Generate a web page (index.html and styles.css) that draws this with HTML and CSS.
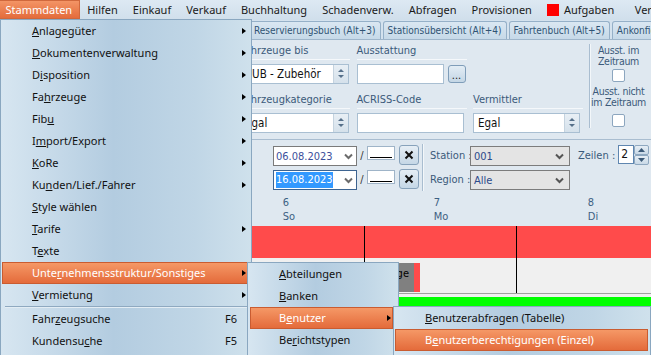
FILE: index.html
```html
<!DOCTYPE html>
<html lang="de">
<head>
    <meta charset="UTF-8" />
    <title>Stammdaten</title>
    <link rel="stylesheet" href="styles.css">
</head>
<body>
    <div class="menubar">
        <span class="mb-item open">Stammdaten</span>
        <span class="mb-item">Hilfen</span>
        <span class="mb-item">Einkauf</span>
        <span class="mb-item">Verkauf</span>
        <span class="mb-item">Buchhaltung</span>
        <span class="mb-item">Schadenverw.</span>
        <span class="mb-item">Abfragen</span>
        <span class="mb-item">Provisionen</span>
        <span class="mb-item tasks"><i class="task-flag"></i>Aufgaben</span>
        <span class="mb-item">Vermietung</span>
    </div>

    <div class="tabs">
        <div class="tab">Reservierungsbuch (Alt+3)</div>
        <div class="tab">Stationsübersicht (Alt+4)</div>
        <div class="tab">Fahrtenbuch (Alt+5)</div>
        <div class="tab">Ankonfigurationen (Alt+6)</div>
    </div>

    <!-- Filter oben -->
    <div class="filter-panel">
        <div class="filter-grid">
            <div class="cap">Fahrzeuge bis</div>
            <div class="cap">Ausstattung</div>
            <div></div>
            <div class="combo wide"><span>ZUB - Zubehör</span><i class="spin"></i></div>
            <div class="with-btn"><div class="edit short"></div><span class="dots">...</span></div>
            <div></div>
            <div class="cap">Fahrzeugkategorie</div>
            <div class="cap">ACRISS-Code</div>
            <div class="cap">Vermittler</div>
            <div class="combo wide"><span>Egal</span><i class="spin"></i></div>
            <div class="edit"></div>
            <div class="combo"><span>Egal</span><i class="spin"></i></div>
        </div>
        <div class="vsep"></div>
        <div class="ausst">
            <span class="ausst-txt">Ausst. im<br>Zeitraum</span>
            <i class="check"></i>
            <span class="ausst-txt second">Ausst. nicht<br>im Zeitraum</span>
            <i class="check last"></i>
        </div>
    </div>

    <!-- Zeitraum / Station -->
    <div class="date-panel">
        <div class="date-rows">
            <div class="date-row">
                <div class="date"><span>06.08.2023</span><svg width="9" height="7"><path d="M1 1.5l3.5 3.5L8 1.5" stroke="#6b6b6b" stroke-width="2" fill="none"/></svg></div>
                <span class="slash">/</span>
                <div class="time"></div>
                <span class="clear"><svg width="10" height="10"><path d="M1.5 1.5l7 7M8.5 1.5l-7 7" stroke="#111" stroke-width="2"/></svg></span>
            </div>
            <div class="date-row">
                <div class="date focus"><span class="sel">16.08.2023</span><svg width="9" height="7"><path d="M1 1.5l3.5 3.5L8 1.5" stroke="#6b6b6b" stroke-width="2" fill="none"/></svg></div>
                <span class="slash">/</span>
                <div class="time"></div>
                <span class="clear"><svg width="10" height="10"><path d="M1.5 1.5l7 7M8.5 1.5l-7 7" stroke="#111" stroke-width="2"/></svg></span>
            </div>
        </div>
        <div class="vsep tall"></div>
        <div class="station">
            <span class="st-label">Station :</span>
            <div class="select"><span>001</span><svg width="9" height="7"><path d="M1 1.5l3.5 3.5L8 1.5" stroke="#555" stroke-width="2" fill="none"/></svg></div>
            <span class="st-label">Region :</span>
            <div class="select"><span>Alle</span><svg width="9" height="7"><path d="M1 1.5l3.5 3.5L8 1.5" stroke="#555" stroke-width="2" fill="none"/></svg></div>
        </div>
        <div class="zeilen">
            <span class="z-label">Zeilen :</span>
            <div class="num">2</div>
            <div class="updown">
                <span><svg width="7" height="4"><path d="M0 4L3.5 0L7 4z" fill="#3c5a78"/></svg></span>
                <span><svg width="7" height="4"><path d="M0 0L3.5 4L7 0z" fill="#3c5a78"/></svg></span>
            </div>
        </div>
    </div>

    <!-- Belegungsplan -->
    <div class="timeline">
        <div class="tl-head">
            <div></div>
            <div class="day-cap"><span>6<br>So</span></div>
            <div class="day-cap"><span>7<br>Mo</span></div>
            <div class="day-cap"><span>8<br>Di</span></div>
        </div>
        <div class="tl-row red">
            <div></div><div class="day"></div><div class="day"></div><div class="day"></div>
        </div>
        <div class="tl-row grey">
            <div></div><div class="day"></div><div class="day"></div><div class="day"></div>
            <div class="booking" style="left: 320px; width: 100px;">Montage</div>
        </div>
        <div class="tl-row green"></div>
    </div>

    <!-- geöffnetes Menü -->
    <div class="menu menu-main">
        <div class="mi sub"><u>A</u>nlagegüter</div>
        <div class="mi sub"><u>D</u>okumentenverwaltung</div>
        <div class="mi sub">D<u>i</u>sposition</div>
        <div class="mi sub">Fa<u>h</u>rzeuge</div>
        <div class="mi sub">Fib<u>u</u></div>
        <div class="mi sub">I<u>m</u>port/Export</div>
        <div class="mi sub"><u>K</u>oRe</div>
        <div class="mi sub">Ku<u>n</u>den/Lief./Fahrer</div>
        <div class="mi"><u>S</u>tyle wählen</div>
        <div class="mi sub"><u>T</u>arife</div>
        <div class="mi">T<u>e</u>xte</div>
        <div class="mi sub on">Unte<u>r</u>nehmensstruktur/Sonstiges</div>
        <div class="mi sub"><u>V</u>ermietung</div>
        <div class="sep"></div>
        <div class="mi">Fahr<u>z</u>eugsuche<span class="key">F6</span></div>
        <div class="mi">Kundensu<u>c</u>he<span class="key">F5</span></div>
    </div>

    <div class="menu menu-sub1">
        <div class="mi"><u>A</u>bteilungen</div>
        <div class="mi"><u>B</u>anken</div>
        <div class="mi sub on">B<u>e</u>nutzer</div>
        <div class="mi">Be<u>r</u>ichtstypen</div>
        <div class="mi">
            <svg class="mi-icon" width="16" height="16"><rect x="4" y="1" width="8" height="5" fill="#9aa3ab"/><rect x="1" y="5" width="14" height="7" rx="1" fill="#7d868e"/><rect x="4" y="10" width="8" height="5" fill="#e8e8e8" stroke="#8a9198"/></svg>
            <u>D</u>rucker
        </div>
    </div>

    <div class="menu menu-sub2">
        <div class="mi"><u>B</u>enutzerabfragen (Tabelle)</div>
        <div class="mi on">B<u>e</u>nutzerberechtigungen (Einzel)</div>
    </div>
</body>
</html>
```

FILE: styles.css
```css
* {
    box-sizing: border-box;
}

html,
body {
    margin: 0;
    padding: 0;
    overflow: hidden;
}

body {
    position: relative;
    width: 651px;
    height: 355px;
    background: #dfe8f0;
    color: #3b5a7a;
    font: 11px "DejaVu Sans Condensed", "Liberation Sans", sans-serif;
}

/* Menüleiste */
.menubar {
    display: flex;
    height: 20px;
    margin-left: -2px;
    background: linear-gradient(#dde9f3, #d0dfeb);
    color: #1a1a1a;
    font: 11px "Noto Sans", sans-serif;
    white-space: nowrap;
}

.mb-item {
    display: flex;
    align-items: center;
    height: 19px;
    padding: 0 7.5px;
}

.mb-item.open {
    padding: 0 6.5px;
    color: #fff;
    background: linear-gradient(#f39465, #e46c3c);
    border: 1px solid #d0683c;
}

.mb-item.tasks {
    padding-right: 13px;
}

.task-flag {
    width: 12px;
    height: 12px;
    margin-right: 5px;
    background: #f00;
}

/* Reiter */
.tabs {
    display: flex;
    height: 20px;
    padding-left: 249px;
    background: #d4e2ee;
    border-bottom: 1px solid #9fb6cb;
    white-space: nowrap;
    overflow: hidden;
}

.tab {
    flex: none;
    margin: 1px 2px 0 0;
    padding: 0 4px;
    line-height: 18px;
    font-size: 10px;
    color: #2f5373;
    background: linear-gradient(#dae7f2, #c6d9e8);
    border: 1px solid #95b0c8;
    border-bottom: 0;
    border-radius: 3px 3px 0 0;
}

/* Filterbereich */
.filter-panel {
    display: flex;
    height: 100px;
    padding: 2px 0 0 240px;
    border-bottom: 1px solid #a9bdd0;
}

.filter-grid {
    display: grid;
    grid-template-columns: repeat(3, 110px);
    grid-template-rows: 22px 27px 22px 20px;
    column-gap: 6.5px;
    align-items: start;
}

.cap {
    height: 18px;
    line-height: 17px;
    white-space: nowrap;
    border-bottom: 1px solid #f5f8fb;
}

.combo,
.edit {
    height: 20px;
    width: 107px;
    background: #fff;
    border: 1px solid #a9bfd2;
}

.combo {
    display: flex;
    align-items: center;
    justify-content: space-between;
    padding-left: 4px;
    color: #111;
    font-size: 11.5px;
    white-space: nowrap;
}

.combo.wide {
    width: 109px;
}

.spin {
    flex: none;
    width: 15px;
    height: 18px;
    background: linear-gradient(#e8eff5, #d5e1eb);
    border-left: 1px solid #c5d3df;
    position: relative;
}

.spin::before,
.spin::after {
    content: "";
    position: absolute;
    left: 4px;
    border-left: 3px solid transparent;
    border-right: 3px solid transparent;
}

.spin::before {
    top: 4px;
    border-bottom: 3px solid #56708a;
}

.spin::after {
    top: 10px;
    border-top: 3px solid #56708a;
}

.with-btn {
    display: flex;
    gap: 4px;
}

.edit.short {
    width: 87px;
}

.dots {
    width: 18px;
    height: 18px;
    margin-top: 1px;
    text-align: center;
    line-height: 20px;
    color: #222;
    background: linear-gradient(#e3edf5, #c4d6e5);
    border: 1px solid #7f9db9;
    border-radius: 3px;
}

.vsep {
    width: 2px;
    height: 84px;
    margin: 2px 0 0 6px;
    border-left: 1px solid #a9bdd0;
    border-right: 1px solid #f3f7fa;
}

.ausst {
    display: flex;
    flex-direction: column;
    align-items: center;
    width: 55px;
    padding-top: 3px;
}

.ausst-txt {
    text-align: center;
    line-height: 11px;
    font-size: 10.5px;
    letter-spacing: -0.3px;
    white-space: nowrap;
}

.ausst-txt.second {
    margin-top: 4px;
}

.check {
    width: 13px;
    height: 13px;
    margin-top: 2px;
    background: #fff;
    border: 1px solid #8ca6bf;
    border-radius: 2px;
}

.check.last {
    margin-top: 6px;
}

/* Datum, Station */
.date-panel {
    display: flex;
    align-items: flex-start;
    height: 53px;
    padding: 6px 0 0 273px;
}

.date-rows {
    display: flex;
    flex-direction: column;
    gap: 4px;
}

.date-row {
    display: flex;
    align-items: flex-start;
    height: 20px;
}

.date {
    display: flex;
    align-items: center;
    justify-content: space-between;
    width: 84px;
    height: 20px;
    padding: 0 3px 0 2px;
    color: #3c4f9c;
    background: #fff;
    border: 1px solid #7a7a7a;
}

.date.focus {
    border-color: #3d6491;
}

.date .sel {
    color: #fff;
    background: #3399ff;
    line-height: 16px;
}

.slash {
    width: 10px;
    line-height: 20px;
    text-align: center;
    color: #333;
}

.time {
    position: relative;
    width: 28px;
    height: 14px;
    margin-right: 4px;
    background: #fff;
    border: 1px solid #9fb4c8;
}

.time::after {
    content: "";
    position: absolute;
    left: 2px;
    right: 2px;
    bottom: 1px;
    border-bottom: 1px solid #000;
}

.clear {
    display: flex;
    align-items: center;
    justify-content: center;
    width: 20px;
    height: 20px;
    margin-top: -1px;
    background: linear-gradient(#e6eef5, #c5d7e6);
    border: 1px solid #87a2bb;
    border-radius: 3px;
}

.vsep.tall {
    height: 47px;
    margin: -2px 0 0 3px;
}

.station {
    display: grid;
    grid-template-columns: 38px 100px;
    column-gap: 2px;
    row-gap: 4px;
    margin-left: 6px;
}

.st-label {
    line-height: 20px;
    text-align: right;
    white-space: nowrap;
}

.select {
    display: flex;
    align-items: center;
    justify-content: space-between;
    height: 20px;
    padding: 0 5px 0 3px;
    color: #2d4a8a;
    background: #e4e4e4;
    border: 1px solid #7c7c7c;
}

.zeilen {
    display: flex;
    align-items: flex-start;
    margin-left: 8px;
    line-height: 20px;
}

.z-label {
    flex: none;
    white-space: nowrap;
}

.num {
    flex: none;
    width: 16px;
    height: 19px;
    margin: -1px 0 0 3px;
    padding-left: 2px;
    line-height: 17px;
    font-size: 12px;
    color: #111;
    background: #fff;
    border: 1px solid #5f86b0;
}

.updown {
    display: flex;
    flex-direction: column;
    margin-top: -1px;
}

.updown span {
    display: flex;
    align-items: center;
    justify-content: center;
    width: 15px;
    height: 10px;
    background: linear-gradient(#e6eef5, #c9d9e7);
    border: 1px solid #8ea8c0;
    border-radius: 2px;
}

/* Zeitleiste */
.timeline {
    background: #f0f0f0;
}

.tl-head,
.tl-row {
    display: grid;
    grid-template-columns: 213px repeat(3, 152px);
    overflow: hidden;
}

.tl-head {
    height: 33px;
    padding-top: 3px;
    background: #dfe8f0;
}

.day-cap {
    text-align: center;
}

.day-cap span {
    display: inline-block;
    text-align: left;
    line-height: 14px;
    color: #3d5f82;
}

.tl-row.red {
    height: 32px;
    background: #ff4b4b;
}

.day {
    border-right: 1px solid #000;
}

.tl-row.grey {
    position: relative;
    height: 36px;
    margin-bottom: 3px;
    border-bottom: 1px solid #a0a0a0;
}

.booking {
    position: absolute;
    top: 5px;
    height: 29px;
    padding: 4px 5px 0 0;
    text-align: right;
    color: #000;
    background: #808080;
    border-right: 6px solid #ff4b4b;
}

.tl-row.green {
    height: 60px;
    background: #00ff00;
}

/* Menüs */
.menu {
    position: absolute;
    color: #111;
    font: 11px "Noto Sans", sans-serif;
    background: linear-gradient(to right, #d7e6f1, #b3cce0 45%, #c0d6e6 78%, #cfe1ec);
    border: 1px solid #8aa7c0;
}

.mi {
    position: relative;
    height: 22px;
    line-height: 20px;
    margin: 0 3px 0 1px;
    padding-left: 29px;
    white-space: nowrap;
    border: 1px solid transparent;
}

.mi.sub::after {
    content: "";
    position: absolute;
    right: 1px;
    top: 7px;
    border-left: 4px solid #000;
    border-top: 3.5px solid transparent;
    border-bottom: 3.5px solid transparent;
}

.mi.on {
    color: #fff;
    background: linear-gradient(#f59866, #e46b3b);
    border-color: #c95c31;
}

.key {
    position: absolute;
    right: 10px;
}

.sep {
    height: 2px;
    margin: 0 3px 0 4px;
    border-top: 1px solid #8fa9c0;
    border-bottom: 1px solid #e3edf4;
}

.mi-icon {
    position: absolute;
    left: 2px;
    top: 2px;
}

.menu-main {
    left: 0;
    top: 19px;
    width: 252px;
    padding-bottom: 6px;
}

.menu-sub1 {
    left: 247px;
    top: 262px;
    width: 152px;
}

.menu-sub1 .mi {
    margin: 0 5px 0 2px;
    padding-left: 28px;
}

.menu-sub2 {
    left: 393px;
    top: 306px;
    width: 258px;
    padding-bottom: 20px;
}

.menu-sub2 .mi {
    margin: 0 2px 0 1px;
}
```
